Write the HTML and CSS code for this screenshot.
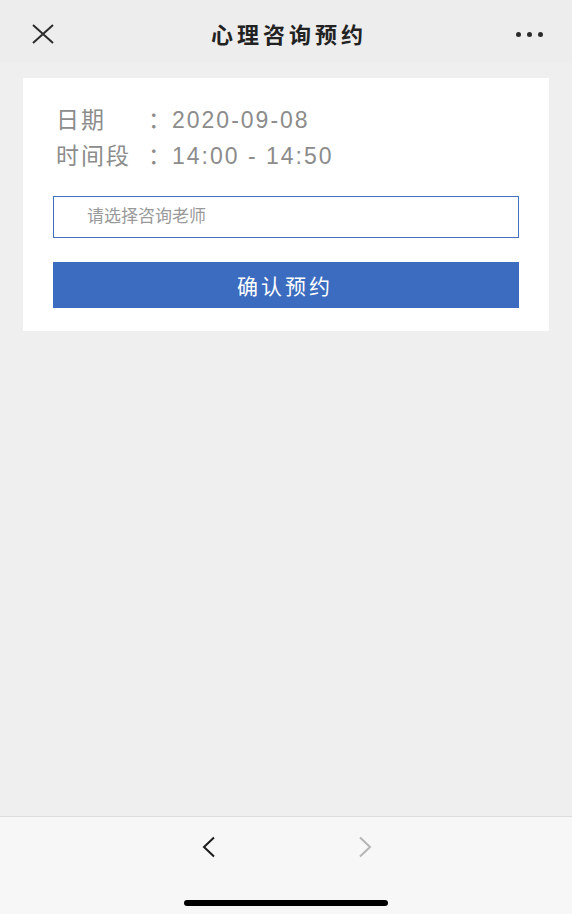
FILE: index.html
```html
<!DOCTYPE html>
<html lang="zh-CN">
<head>
    <meta charset="UTF-8">
    <meta name="viewport" content="width=device-width, initial-scale=1.0">
    <title>心理咨询预约</title>
    <link rel="stylesheet" href="styles.css">
</head>
<body>

    <div id="app">
        <div class="topbar">
            <span class="topbar-btn">
                <svg width="24" height="20" viewBox="0 0 24 20">
                    <path d="M2 1 L22 19 M22 1 L2 19" stroke="#2b2b2b" stroke-width="2" fill="none"/>
                </svg>
            </span>
            <h1 class="title">心理咨询预约</h1>
            <span class="topbar-btn more">
                <i></i><i></i><i></i>
            </span>
        </div>

        <div class="main">
            <div class="card">
                <div class="info-row">
                    <span class="label">日期</span><span class="colon">：</span><span class="value">2020-09-08</span>
                </div>
                <div class="info-row">
                    <span class="label">时间段</span><span class="colon">：</span><span class="value">14:00 - 14:50</span>
                </div>

                <input type="text" class="teacher" placeholder="请选择咨询老师">
                <button class="submit">确认预约</button>
            </div>
        </div>

        <div class="bottombar">
            <div class="nav">
                <svg width="16" height="22" viewBox="0 0 16 22">
                    <path d="M13 1.5 L3 11 L13 20.5" stroke="#1c1c1c" stroke-width="2" fill="none"/>
                </svg>
                <svg width="16" height="22" viewBox="0 0 16 22">
                    <path d="M3 1.5 L13 11 L3 20.5" stroke="#b5b5b5" stroke-width="2" fill="none"/>
                </svg>
            </div>
            <div class="home-bar"></div>
        </div>
    </div>

</body>
</html>
```

FILE: styles.css
```css
body {
    margin: 0;
    font-family: "Liberation Sans", "Noto Sans CJK SC", sans-serif;
    background-color: #efefef;
}

#app {
    height: 914px;
    display: flex;
    flex-direction: column;
}

.topbar {
    height: 62px;
    background-color: #ededed;
    display: flex;
    align-items: center;
    justify-content: space-between;
    padding: 0 29px 0 31px;
    flex-shrink: 0;
}

.topbar-btn {
    width: 30px;
    display: flex;
    align-items: center;
    padding-top: 6px;
}

.title {
    margin: 4px 0 0 4px;
    font-size: 22px;
    font-weight: bold;
    color: #222;
    letter-spacing: 4px;
}

.more {
    justify-content: flex-end;
    gap: 6px;
}

.more i {
    width: 5px;
    height: 5px;
    border-radius: 50%;
    background-color: #2b2b2b;
}

.main {
    flex: 1;
    padding: 16px 23px 0 23px;
}

.card {
    background-color: #fff;
    padding: 24px 30px 23px 30px;
}

.info-row {
    font-size: 23px;
    letter-spacing: 2px;
    color: #8c8c8c;
    line-height: 36px;
    display: flex;
}

.label {
    width: 92px;
    padding-left: 3px;
}

.colon {
    width: 24px;
}

.teacher {
    display: block;
    width: 100%;
    height: 42px;
    margin-top: 22px;
    box-sizing: border-box;
    border: 1.5px solid #4470bd;
    padding: 0 0 0 33px;
    font-family: inherit;
    font-size: 17px;
    outline: none;
}

.teacher::placeholder {
    color: #9a9a9a;
}

.submit {
    display: block;
    width: 100%;
    height: 46px;
    margin-top: 24px;
    padding-left: 4px;
    background-color: #3b6cbf;
    color: #fff;
    border: none;
    font-family: inherit;
    font-size: 21px;
    letter-spacing: 3px;
    cursor: pointer;
}

.bottombar {
    height: 97px;
    background-color: #f7f7f7;
    border-top: 1px solid #dedede;
    flex-shrink: 0;
    display: flex;
    flex-direction: column;
    align-items: center;
}

.nav {
    display: flex;
    gap: 140px;
    margin-top: 19px;
    margin-left: 2px;
}

.home-bar {
    width: 204px;
    height: 6px;
    border-radius: 3px;
    background-color: #000;
    margin-top: 42px;
}
```
